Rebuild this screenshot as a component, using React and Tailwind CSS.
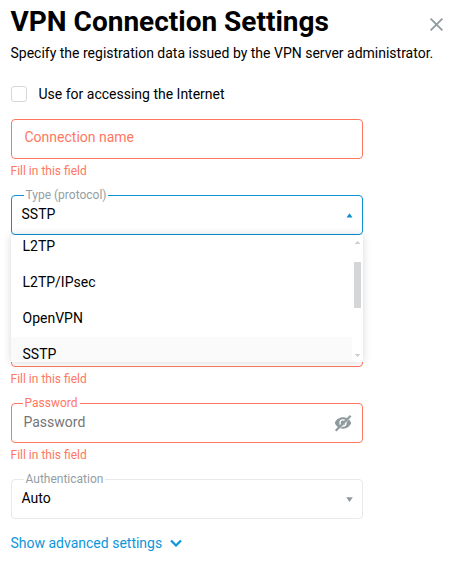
import React, { useState } from 'react';

const PROTOCOLS = ['L2TP', 'L2TP/IPsec', 'OpenVPN', 'SSTP'];

function FieldError() {
    return <p className="h-9 pt-1 text-xs leading-4 text-[#ff7761]">Fill in this field</p>;
}

function FloatingLabel({ className, children }) {
    return (
        <span className={`absolute -top-[9px] bg-white text-xs leading-4 whitespace-nowrap ${className}`}>
            {children}
        </span>
    );
}

function TextField({ placeholder }) {
    return (
        <div>
            <div className="h-10 flex items-center rounded border border-[#ff7761] pl-[13px] pb-1">
                {placeholder && <span className="text-sm leading-5 text-[#ff7761]">{placeholder}</span>}
            </div>
            <FieldError />
        </div>
    );
}

function EyeOff() {
    return (
        <svg width="18" height="18" viewBox="0 0 18 18" fill="none">
            <path
                fillRule="evenodd"
                clipRule="evenodd"
                d="M9 3.300C5.300 3.300 2.100 5.500.8 9c1.300 3.500 4.500 5.700 8.200 5.700s6.900-2.200 8.200-5.700C15.900 5.500 12.700 3.300 9 3.300Zm0 2a3.700 3.700 0 1 1 0 7.400 3.700 3.700 0 0 1 0-7.400Z"
                fill="#8f9a9f"
            />
            <circle cx="9" cy="9" r="2.400" fill="#8f9a9f" />
            <path d="M3.600 16.700 16.800 3.500" stroke="#fff" strokeWidth="0.700" />
            <path d="M1.700 16.700 16.700 1.700" stroke="#8f9a9f" strokeWidth="2.200" />
        </svg>
    );
}

function ProtocolMenu({ value, onSelect }) {
    return (
        <div className="absolute z-10 -left-px top-[39px] w-[352px] h-[127px] flex justify-between overflow-hidden rounded-t bg-white shadow-[0_0_8px_rgba(0,0,0,0.16)]">
            <ul className="w-[341px] -mt-[6px]">
                {PROTOCOLS.map((item) => (
                    <li
                        key={item}
                        onClick={() => onSelect(item)}
                        className={`h-9 flex items-center pl-3 pb-0.5 text-sm leading-5 ${item === value ? 'bg-[#fafafa]' : 'bg-white'}`}
                    >
                        {item}
                    </li>
                ))}
            </ul>
            <div className="w-[9px] flex flex-col items-center pr-0.5 pt-[6px] pb-[5px]">
                <svg width="5" height="3" viewBox="0 0 5 3" shapeRendering="crispEdges"><path d="M2 0h1v1h1v1h1v1H0V2h1V1h1Z" fill="#cfd0d2" /></svg>
                <div className="w-[7px] h-[46px] mt-[18px] shrink-0 bg-[#d5d6d8]" />
                <svg className="mt-auto" width="5" height="3" viewBox="0 0 5 3" shapeRendering="crispEdges"><path d="M0 0h5v1H4v1H3v1H2V2H1V1H0Z" fill="#cfd0d2" /></svg>
            </div>
        </div>
    );
}

export default function App() {
    const [open, setOpen] = useState(true);
    const [protocol, setProtocol] = useState('SSTP');

    const handleSelect = (item) => {
        setProtocol(item);
        setOpen(false);
    };

    return (
        <div className="w-[455px] h-[563px] overflow-hidden bg-white pl-[10.5px] font-[Roboto,sans-serif] text-black">
            <div className="flex items-start justify-between pr-3 pt-1">
                <h1 className="text-[28px] leading-9 font-bold whitespace-nowrap">VPN Connection Settings</h1>
                <button className="mt-[14px]">
                    <svg width="13" height="13" viewBox="0 0 13 13" fill="none" stroke="#8f9a9f" strokeWidth="1.800">
                        <path d="m.6.6 11.800 11.800M12.400.6.6 12.400" />
                    </svg>
                </button>
            </div>
            <p className="mt-[3px] text-sm leading-5 whitespace-nowrap">Specify the registration data issued by the VPN server administrator.</p>

            <label className="mt-[21px] flex items-center text-sm leading-5">
                <span className="w-4 h-4 rounded-[3px] border border-[#d5d7d8]" />
                <span className="ml-3">Use for accessing the Internet</span>
            </label>

            <div className="mt-[15px] w-[352px]">
                <TextField placeholder="Connection name" />

                <div className="relative h-10 mb-[92px] rounded border border-[#0b91d1]">
                    <FloatingLabel className="left-3 pl-0.5 pr-px text-[#949ea3]">Type (protocol)</FloatingLabel>
                    <button onClick={() => setOpen(!open)} className="w-full h-full flex items-center justify-between pl-[10px] pr-[9px] pb-0.5 text-sm leading-5">
                        <span>{protocol}</span>
                        <svg className="mt-0.5" width="7" height="5" viewBox="0 0 7 5"><path d="M3.500 .3 6.500 4.600H.5Z" fill="#0b91d1" /></svg>
                    </button>
                    {open && <ProtocolMenu value={protocol} onSelect={handleSelect} />}
                </div>

                <TextField />

                <div className="relative h-10 flex items-center justify-between rounded border border-[#ff7761] pl-3 pr-[10px]">
                    <FloatingLabel className="left-[11px] px-0.5 text-[#ff7761]">Password</FloatingLabel>
                    <span className="pb-0.5 text-sm leading-5 text-[#757575]">Password</span>
                    <EyeOff />
                </div>
                <FieldError />

                <div className="relative h-10 flex items-center justify-between rounded border border-[#e8e9ea] pl-[10px] pr-[9px]">
                    <FloatingLabel className="left-3 px-0.5 text-[#949ea3]">Authentication</FloatingLabel>
                    <span className="pb-0.5 text-sm leading-5">Auto</span>
                    <svg width="7" height="5" viewBox="0 0 7 5"><path d="M.2 .3h6.600L3.500 4.900Z" fill="#8f9a9f" /></svg>
                </div>

                <button className="mt-[14px] flex items-center text-sm leading-5 text-[#0b96da]">
                    Show advanced settings
                    <svg className="ml-2" width="12" height="8" viewBox="0 0 12 8" fill="none" stroke="#0b96da" strokeWidth="2.200">
                        <path d="m1 1.500 5 5 5-5" />
                    </svg>
                </button>
            </div>
        </div>
    );
}
